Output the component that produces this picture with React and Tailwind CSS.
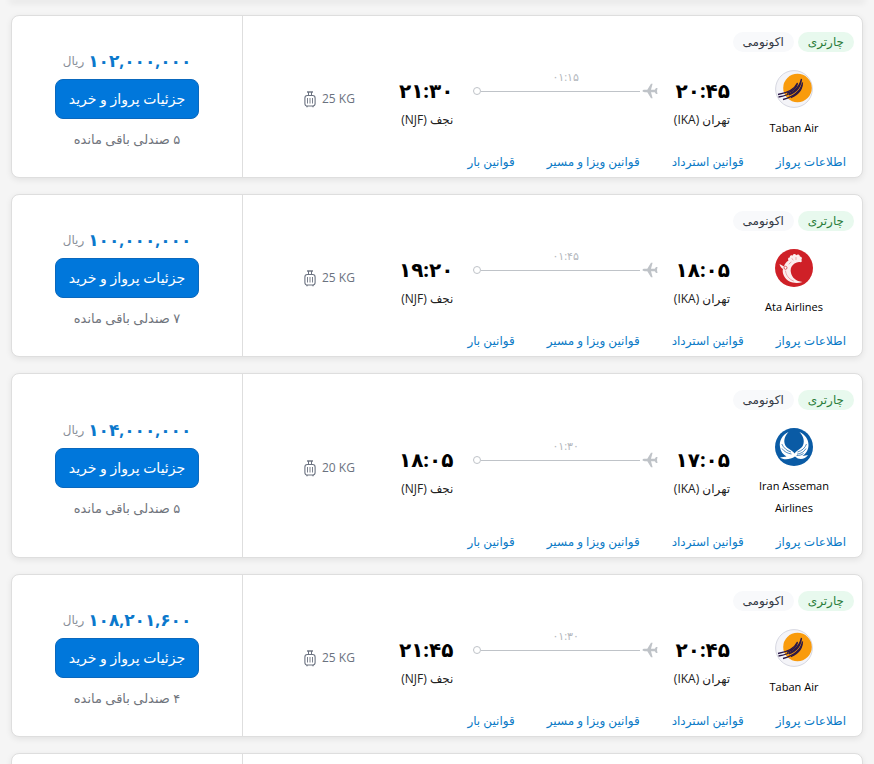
const flights = [
  {
    id: 1,
    airline: 'Taban Air',
    logo: 'taban',
    from: { time: '۲۰:۴۵', city: 'تهران (IKA)' },
    to: { time: '۲۱:۳۰', city: 'نجف (NJF)' },
    duration: '۰۱:۱۵',
    baggage: '25 KG',
    price: '۱۰۲,۰۰۰,۰۰۰',
    seats: '۵',
  },
  {
    id: 2,
    airline: 'Ata Airlines',
    logo: 'ata',
    from: { time: '۱۸:۰۵', city: 'تهران (IKA)' },
    to: { time: '۱۹:۲۰', city: 'نجف (NJF)' },
    duration: '۰۱:۴۵',
    baggage: '25 KG',
    price: '۱۰۰,۰۰۰,۰۰۰',
    seats: '۷',
  },
  {
    id: 3,
    airline: 'Iran Asseman Airlines',
    logo: 'aseman',
    from: { time: '۱۷:۰۵', city: 'تهران (IKA)' },
    to: { time: '۱۸:۰۵', city: 'نجف (NJF)' },
    duration: '۰۱:۳۰',
    baggage: '20 KG',
    price: '۱۰۴,۰۰۰,۰۰۰',
    seats: '۵',
  },
  {
    id: 4,
    airline: 'Taban Air',
    logo: 'taban',
    from: { time: '۲۰:۴۵', city: 'تهران (IKA)' },
    to: { time: '۲۱:۴۵', city: 'نجف (NJF)' },
    duration: '۰۱:۳۰',
    baggage: '25 KG',
    price: '۱۰۸,۲۰۱,۶۰۰',
    seats: '۴',
  },
];

const links = ['اطلاعات پرواز', 'قوانین استرداد', 'قوانین ویزا و مسیر', 'قوانین بار'];

const cardClass = 'flex rounded-lg border border-[#dedede] bg-white shadow-[0_2px_6px_rgba(0,0,0,0.08)]';

function TabanLogo() {
  return (
    <svg viewBox="0 0 38 38" className="size-[38px]" aria-hidden="true">
      <circle cx="19" cy="19" r="18.4" fill="#f4f4f8" stroke="#d3d4de" strokeWidth="0.9" />
      <circle cx="22.5" cy="18" r="14.3" fill="#f99b0c" />
      <path
        d="M3 24.5C12 23 19.500 19.500 22.500 13M3.500 27C14 25.500 24 20 26.500 9M8 29.500C18 27 26.500 21 27.500 12.500"
        fill="none"
        stroke="#2a1747"
        strokeWidth="1.3"
      />
      <path d="M12 22.500C17 20.500 21 17 22.800 12.300C23.500 17 19 22 12 24Z" fill="#2a1747" />
      <path d="M14 24.300C21 20.500 25.500 15 26.400 8.300C27.800 15 23 22.500 14 25.600Z" fill="#2a1747" />
      <path d="M16 27C23 22.500 26.800 18.500 27.300 12C29 18 25 24.500 16 28.200Z" fill="#2a1747" />
    </svg>
  );
}

function AtaLogo() {
  return (
    <svg viewBox="0 0 38 38" className="size-[38px]" aria-hidden="true">
      <circle cx="19" cy="19" r="19" fill="#cf2027" />
      <path
        d="M4.500 15C6 16 7.500 16.500 9 17.500C9.500 15 11 13 13.500 11.500C12.500 10 13.200 8.500 14.800 8.600C14.600 6.700 16.200 5.700 17.500 6.700C18 4.700 20.400 4.500 21.200 6.200C22.700 4.600 25 5.600 24.900 7.600C26.800 7.500 27.500 9.600 26.300 11C27.300 12 26.800 13 25.500 13.200C23.500 12.700 21.500 13.200 19.500 14.500C16.500 16.500 15.200 19.500 15.800 23C16.700 28.500 21 32.300 27.500 33C20 35.500 12 33 9 27C7.500 24 7.500 21.500 8 20C6.500 19 5 17.500 4.500 15Z"
        fill="#fbeeee"
      />
      <path
        d="M10.500 22C11 26 13.500 30 18.500 32M14 15C14.500 14.200 15.200 13.700 16 13.200M17 9.500L18 11M21 8.500V10.500"
        fill="none"
        stroke="#e58a8e"
        strokeWidth="0.7"
        strokeLinecap="round"
      />
      <circle cx="10.500" cy="18.800" r="1.500" fill="#fff" stroke="#cf2027" strokeWidth="0.7" />
    </svg>
  );
}

function AsemanLogo() {
  return (
    <svg viewBox="0 0 38 38" className="size-[38px]" aria-hidden="true">
      <circle cx="19" cy="19" r="19" fill="#0a5ba5" />
      <path
        d="M13.500 4C7 7 4 13 5 19C5.500 23.500 8 26.500 11.500 28.500L5 29.500C9 32.500 15.500 31.500 20 28.500C24 32.500 30 31.500 33 27L27.500 28C31 25.500 33.500 22 33.500 17C33.500 11 30 6.500 24.500 4C29.500 9 29.800 15 27 19C24.500 22 21 22.500 19.500 25.500C18 22.500 14.500 22 11.500 19C8.200 15 8.500 9 13.500 4Z"
        fill="#fff"
      />
      <path
        d="M6.800 16C8.500 20 12 22.800 16 24M7 20.500C9.500 24 12.500 25.300 16.500 26M31.500 16C30 20 27 22.800 22.500 24M31 20.500C29 24 26 25.500 22 26.200M28.500 25.500C26.500 27 24.500 27.500 21.500 27.600"
        fill="none"
        stroke="#0a5ba5"
        strokeWidth="0.7"
      />
    </svg>
  );
}

const logos = { taban: TabanLogo, ata: AtaLogo, aseman: AsemanLogo };

function SuitcaseIcon() {
  return (
    <svg viewBox="0 0 12 17" className="h-[17px] w-3" fill="none" stroke="#6b7280" aria-hidden="true">
      <path d="M3 1H9" strokeWidth="1.400" />
      <path d="M4.500 1V4.500M7.500 1V4.500" />
      <rect x="0.900" y="4.500" width="10.200" height="10.500" rx="2.400" strokeWidth="1.100" />
      <path d="M3.500 7V12.500M6 7V12.500M8.500 7V12.500" strokeWidth="0.900" />
      <path d="M3 15V16.300M9 15V16.300" strokeWidth="1.300" />
    </svg>
  );
}

function PlaneIcon() {
  return (
    <svg viewBox="0 0 16 16" className="size-4 shrink-0" fill="#bfc3c8" aria-hidden="true">
      <path d="M0.500 8C0.500 7.300 1.500 6.800 2.700 6.800H5.300L9 0.800H10.600L9 6.800H12.800L14 5H15.500L15 8L15.500 11H14L12.800 9.200H9L10.600 15.200H9L5.300 9.200H2.700C1.500 9.200 0.500 8.700 0.500 8Z" />
    </svg>
  );
}

function Stop({ time, city }) {
  return (
    <div className="pt-[10px]">
      <div className="text-xl leading-7 font-bold text-black">{time}</div>
      <div className="mt-1 text-xs leading-[22px] whitespace-nowrap text-[#222]">{city}</div>
    </div>
  );
}

function FlightCard({ flight }) {
  const Logo = logos[flight.logo];

  return (
    <article className={cardClass}>
      <div className="flex min-w-0 flex-1 flex-col pt-4 pb-1">
        <div className="flex gap-1 pr-2 text-xs leading-5">
          <span className="rounded-full bg-[#e8f9ee] px-[10px] text-[#2c7d3b]">چارتری</span>
          <span className="rounded-full bg-[#f8f9fb] px-[10px] text-[#333844]">اکونومی</span>
        </div>

        <div className="mt-[7px] flex items-center pr-2">
          <div className="flex w-[120px] flex-col items-center pt-[11px]">
            <Logo />
            <div className="mt-[9px] w-20 text-center text-[11px] leading-[22px] text-black" dir="ltr">
              {flight.airline}
            </div>
          </div>

          <div className="flex min-w-0 flex-1 items-start pr-1">
            <Stop {...flight.from} />
            <div className="mr-4 ml-5 flex-1">
              <div className="text-center text-[11px] leading-5 text-[#b4b8bd]">{flight.duration}</div>
              <div className="flex h-2 items-center gap-[2px]">
                <PlaneIcon />
                <div className="flex flex-1 items-center">
                  <span className="h-px flex-1 bg-[#bfc3c8]" />
                  <span className="size-2 rounded-full border border-[#bfc3c8]" />
                </div>
              </div>
            </div>
            <Stop {...flight.to} />
          </div>

          <div className="mr-11 ml-[61px] flex items-center gap-[6px]" dir="ltr">
            <SuitcaseIcon />
            <span className="text-xs leading-5 whitespace-nowrap text-[#6b7280]">{flight.baggage}</span>
          </div>
        </div>

        <nav className="mt-3 flex gap-8 pr-4 text-xs leading-[22px] text-[#0b7ac6]">
          {links.map((label) => (
            <a key={label} href="#" className="whitespace-nowrap hover:underline">
              {label}
            </a>
          ))}
        </nav>
      </div>

      <div className="flex w-[231px] shrink-0 flex-col items-center justify-center border-r border-[#dedede] pt-1">
        <div className="flex items-center gap-1 leading-7" dir="ltr">
          <span className="text-xs text-[#8a9099]">ریال</span>
          <span className="text-[17px] leading-7 font-bold text-[#0b78cc]">{flight.price}</span>
        </div>
        <button
          type="button"
          className="mt-1 h-10 w-36 rounded-lg border border-[#0a68bd] bg-[#0077db] text-sm font-medium text-white hover:bg-[#0069c2]"
        >
          جزئیات پرواز و خرید
        </button>
        <div className="mt-2 text-[13px] leading-6 text-[#70757d]">{flight.seats} صندلی باقی مانده</div>
      </div>
    </article>
  );
}

export default function App() {
  return (
    <main
      dir="rtl"
      className="h-screen overflow-hidden bg-[#f5f5f5] px-[11px] font-['Open_Sans','DejaVu_Sans',sans-serif]"
    >
      <div className="-mt-px flex flex-col gap-4">
        <div className="h-0 shadow-[0_2px_6px_2px_rgba(0,0,0,0.08)]" />
        {flights.map((flight) => (
          <FlightCard key={flight.id} flight={flight} />
        ))}
        <div className={cardClass}>
          <div className="flex-1" />
          <div className="h-40 w-[231px] border-r border-[#dedede]" />
        </div>
      </div>
    </main>
  );
}
